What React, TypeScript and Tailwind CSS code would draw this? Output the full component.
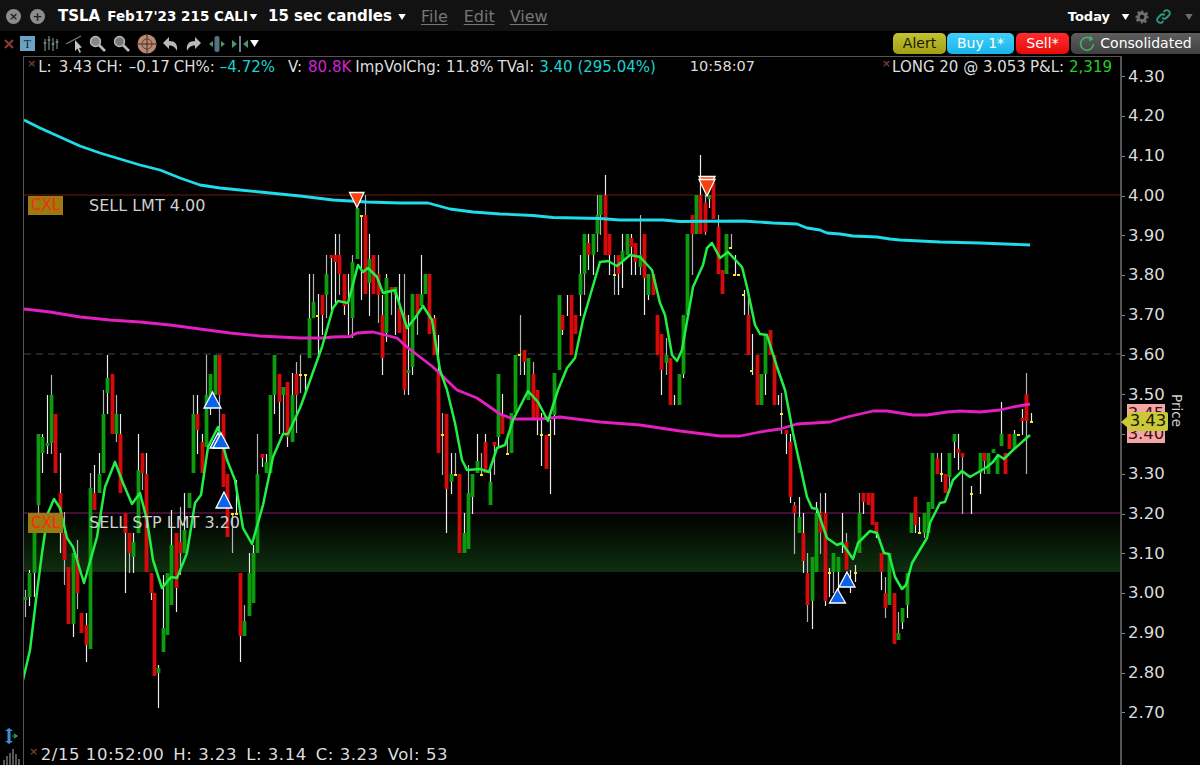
import React from "react";

type C = [number, string, number, number, number?, number?];

const groups: { ox: number; items: C[] }[] = [
  {
    ox: 0,
    items: [
      [75, "g", 597, 600, 590, 617], [88, "g", 573, 597, 570, 606], [101, "g", 527, 573, 520, 597], [114, "g", 434, 505, 434, 513],
      [127, "g", 437, 453, 434, 473], [140, "g", 443, 446, 395, 454], [153, "g", 395, 443, 375, 454], [166, "r", 414, 473],
      [179, "r", 493, 510, 453, 553], [192, "r", 533, 560, 512, 585], [205, "r", 567, 624], [218, "g", 553, 624, 553, 637],
      [231, "r", 558, 593, 540, 609], [244, "r", 613, 633], [257, "r", 625, 645, 613, 662], [270, "g", 488, 649, 473, 649],
      [283, "r", 493, 510, 465, 510], [296, "g", 474, 493, 453, 493], [309, "g", 414, 473, 390, 473], [322, "g", 378, 393, 355, 414],
      [335, "r", 374, 434], [348, "g", 414, 434, 395, 442], [361, "r", 434, 493, 414, 493], [374, "r", 513, 533, 513, 593],
      [387, "r", 533, 553, 533, 573], [400, "g", 542, 557, 533, 573], [413, "g", 470, 533, 434, 533], [426, "r", 453, 473, 453, 490],
      [439, "r", 474, 572, 453, 572], [452, "r", 573, 593, 573, 600], [462, "r", 593, 676], [475, "g", 668, 673, 665, 708],
      [488, "g", 628, 652, 575, 628], [501, "g", 573, 635], [514, "g", 545, 605, 510, 605], [527, "r", 533, 588, 533, 612],
      [540, "r", 542, 553, 507, 575], [553, "g", 530, 553, 493, 553], [566, "g", 493, 508], [579, "g", 414, 473, 395, 473],
      [592, "r", 414, 430, 395, 454], [605, "r", 442, 473, 434, 473], [618, "g", 395, 447, 355, 447], [631, "g", 374, 407, 374, 415],
      [644, "g", 355, 395], [656, "r", 355, 395, 355, 430], [669, "r", 414, 487], [682, "r", 474, 537], [695, "w", 513, 513, 513, 553],
      [708, "w", 480, 480, 480, 513], [720, "r", 573, 636, 573, 662], [733, "g", 621, 636, 605, 621], [746, "g", 573, 616, 553, 616],
      [759, "g", 553, 603, 545, 553], [772, "g", 474, 553, 434, 553], [785, "r", 454, 458, 454, 467], [798, "g", 462, 473, 454, 473],
      [811, "g", 395, 473], [823, "g", 355, 395, 355, 414], [836, "r", 374, 402, 374, 434], [849, "g", 387, 395, 387, 434],
      [862, "r", 382, 437, 382, 447], [875, "g", 395, 442, 373, 442], [888, "r", 374, 395, 362, 433],
    ],
  },
  {
    ox: 300,
    items: [
      [1, "w", 355, 355, 355, 393], [14, "w", 375, 375, 375, 393], [27, "g", 318, 358, 274, 358], [40, "g", 302, 318, 274, 318],
      [53, "w", 316, 316, 294, 355], [66, "r", 295, 315, 295, 335], [79, "g", 274, 295, 255, 318], [92, "r", 255, 258, 255, 315],
      [105, "r", 255, 262, 234, 303], [118, "r", 255, 274, 234, 295], [131, "r", 274, 306, 274, 315], [144, "w", 274, 274, 274, 335],
      [157, "g", 262, 318, 255, 338], [170, "g", 208, 259], [183, "w", 216, 216, 216, 300], [194, "r", 215, 294, 195, 294],
      [207, "g", 259, 283, 234, 316], [220, "r", 255, 294], [233, "r", 274, 295, 255, 323], [246, "r", 315, 358, 295, 375],
      [259, "g", 278, 333, 274, 342], [272, "r", 287, 290, 287, 315], [285, "g", 287, 295, 287, 335], [298, "r", 308, 333, 274, 333],
      [311, "r", 315, 390, 274, 395], [324, "g", 370, 373, 315, 395], [337, "g", 294, 367, 294, 375], [350, "r", 294, 313, 294, 335],
      [362, "g", 294, 306, 255, 306], [375, "g", 274, 294], [388, "r", 274, 334], [401, "r", 318, 355, 315, 355],
      [414, "r", 373, 453, 335, 453], [426, "w", 413, 413, 413, 475], [439, "r", 414, 489, 414, 533], [452, "g", 474, 482, 453, 494],
      [465, "w", 475, 475, 453, 475], [478, "r", 474, 553], [491, "g", 533, 553, 513, 533], [504, "g", 493, 549, 465, 493],
      [517, "g", 474, 497, 474, 514], [530, "g", 461, 473, 434, 461], [543, "w", 475, 475, 453, 475], [556, "r", 442, 473, 434, 473],
      [569, "g", 482, 505, 470, 482], [582, "r", 442, 446, 442, 475], [595, "g", 374, 437, 374, 447], [607, "r", 414, 434, 394, 434],
      [620, "w", 454, 454, 434, 453], [633, "g", 413, 453], [646, "g", 355, 413], [659, "w", 355, 355, 315, 375],
      [672, "r", 350, 362, 350, 375], [685, "g", 358, 400], [698, "r", 374, 420, 362, 420], [711, "r", 390, 420, 390, 435],
      [724, "w", 413, 413, 413, 466], [737, "r", 435, 469], [750, "w", 420, 420, 420, 494], [763, "g", 373, 415, 373, 435],
      [776, "g", 295, 370], [787, "r", 315, 330, 315, 335], [802, "w", 295, 295, 295, 316], [813, "r", 295, 355],
      [826, "r", 315, 334], [839, "g", 274, 295, 255, 316], [852, "g", 234, 274, 234, 295], [865, "r", 243, 255, 234, 270],
      [878, "g", 234, 255, 234, 275], [891, "g", 215, 234, 195, 252],
    ],
  },
  {
    ox: 600,
    items: [
      [0, "g", 195, 215, 195, 235], [15, "r", 195, 255, 175, 255], [28, "r", 234, 255, 234, 275], [41, "w", 255, 255, 255, 295],
      [54, "r", 255, 274, 255, 295], [67, "g", 251, 260, 234, 288], [80, "g", 234, 255], [93, "r", 238, 247, 234, 275],
      [106, "r", 243, 262, 243, 275], [119, "g", 255, 267, 215, 275], [132, "r", 234, 278, 234, 315], [145, "g", 274, 295, 274, 300],
      [158, "r", 274, 295], [171, "r", 315, 355], [184, "r", 334, 370, 334, 395], [197, "g", 355, 363, 338, 375],
      [210, "r", 358, 405], [223, "w", 395, 395, 395, 405], [236, "g", 374, 405], [249, "g", 315, 374, 315, 378],
      [262, "g", 234, 315], [275, "r", 215, 234, 215, 275], [288, "g", 195, 234], [301, "r", 195, 234, 155, 234],
      [314, "r", 203, 232, 195, 235], [327, "g", 195, 199, 195, 208], [340, "r", 183, 219], [353, "r", 227, 274, 215, 274],
      [366, "r", 270, 294], [379, "g", 234, 274], [392, "w", 234, 234, 234, 248], [405, "w", 255, 255, 255, 275],
      [431, "w", 290, 290, 290, 315], [444, "r", 315, 355, 295, 315], [457, "w", 334, 334, 334, 375], [470, "r", 355, 405],
      [483, "g", 374, 405], [496, "g", 335, 374, 335, 395], [509, "r", 330, 355], [522, "r", 355, 405], [535, "w", 395, 395, 395, 405],
    ],
  },
  {
    ox: 780,
    items: [
      [4, "w", 393, 393, 393, 434], [17, "r", 430, 434, 430, 454], [30, "r", 442, 497, 434, 503], [43, "r", 505, 513, 502, 554],
      [56, "g", 517, 533, 497, 517], [69, "r", 533, 561, 513, 573], [82, "r", 573, 605, 553, 622], [95, "g", 557, 601, 557, 629],
      [108, "g", 513, 572, 502, 572], [121, "r", 513, 533, 493, 554], [134, "r", 513, 601, 493, 606], [147, "w", 568, 568, 568, 597],
      [160, "g", 553, 572, 553, 593], [173, "g", 557, 572, 557, 593], [186, "w", 513, 513, 513, 553], [198, "r", 542, 570, 533, 570],
      [211, "w", 570, 570, 570, 593], [224, "w", 565, 565, 565, 582], [237, "g", 513, 553, 493, 513], [250, "r", 493, 502, 493, 514],
      [263, "r", 493, 505], [276, "r", 493, 525], [289, "r", 522, 533, 522, 538], [302, "r", 553, 572, 553, 590],
      [315, "r", 593, 608, 577, 618], [328, "g", 553, 605], [341, "r", 593, 644], [354, "g", 633, 640, 612, 633],
      [367, "g", 608, 622, 608, 629], [380, "g", 573, 605, 573, 618], [393, "g", 513, 533], [405, "r", 497, 525, 497, 533],
      [418, "w", 517, 517, 517, 533], [431, "g", 513, 533, 513, 538], [444, "g", 502, 533], [457, "g", 453, 509],
      [470, "r", 458, 474, 453, 474], [483, "w", 453, 453, 453, 482], [496, "r", 474, 493], [508, "g", 453, 477, 453, 493],
      [521, "g", 434, 442, 434, 458], [534, "r", 449, 453, 434, 470], [547, "r", 453, 457, 453, 514], [573, "w", 486, 486, 486, 514],
      [599, "g", 453, 473, 453, 494], [612, "r", 453, 461, 453, 474], [625, "g", 453, 474], [638, "g", 449, 453],
      [651, "g", 457, 474], [662, "g", 434, 446, 402, 434], [675, "r", 453, 474], [688, "r", 434, 449], [701, "g", 434, 449, 430, 449],
      [727, "r", 418, 421, 409, 435], [739, "r", 394, 421, 373, 474], [752, "w", 413, 413, 413, 422],
    ],
  },
];

const dashes: [number, number][] = [
  [300, 375], [305, 375], [317, 316], [361, 216], [442, 435], [455, 475], [481, 475], [541, 435], [549, 435],
  [507, 454], [519, 355], [614, 275], [730, 248], [734, 275], [738, 275], [743, 295], [751, 371], [232, 514], [236, 514],
  [829, 573], [855, 573], [919, 533], [941, 474], [971, 494], [1018, 435], [1031, 422], [781, 414],
];

const cyan = "24,120 40,128 60,137 80,146 100,153 120,159 140,165 160,170 180,178 200,185 220,188 240,190 260,192 280,194 300,196 333,200 367,202 400,203 428,203 450,209 473,212 500,214 533,215.5 553,217.5 600,218.5 620,220 663,220 680,221.5 743,221 773,223 797,224 807,228 820,230 827,233 840,234 853,236 877,237 890,239 900,240 940,242 980,243 1030,245";
const magenta = "24,309 50,312 80,317 110,320 140,322 170,325 200,329 230,333 260,336 300,338 323,338 333,337 350,336.5 357,333 373,332 397,338 407,347 433,367 457,390 477,398 500,414 513,419 540,419 560,417 600,422 640,425 680,431 720,436 740,436 760,432 780,429 797,424 830,422 847,417 873,411 887,411 913,415 927,415 947,412 960,411 980,412 1000,410 1013,407 1030,404";
const green = "23,680 30,650 36,600 42,553 48,513 54,499 60,508 67,538 73,547 84,583 97,537 105,487 115,462 123,483 132,504 140,493 147,520 153,560 162,588 171,577 177,578 187,553 195,503 201,495 208,447 218,427 227,460 235,480 243,528 252,544 263,505 273,457 283,434 288,434 300,408 303,400 322,347 333,308 338,301 348,303 358,265 363,272 368,268 377,277 383,293 395,290 407,328 415,318 423,306 432,320 440,370 447,390 455,423 462,460 467,470 480,469 489,472 497,448 505,445 513,420 528,391 538,402 548,421 558,390 567,368 575,358 583,320 600,262 608,261 617,266 630,255 640,257 652,270 660,303 665,315 672,355 677,361 682,350 693,287 703,265 707,248 712,243 720,258 728,252 742,267 747,287 755,325 760,334 767,335 777,367 785,390 793,433 807,497 812,508 817,509 827,538 837,545 842,543 853,559 858,543 870,531 877,533 884,553 889,554 895,577 902,589 906,585 912,563 927,538 930,523 940,503 945,502 953,480 962,471 970,477 987,467 993,462 998,455 1004,459 1013,450 1030,435";

const up: [number, number, number, number][] = [
  [212.5, 392, 408, 8.5], [218, 433, 448, 8], [221, 433, 448, 8], [224, 492, 508, 8], [847, 572, 587, 8], [837.5, 589, 603, 8],
];

function Candles() {
  return (
    <>
      {groups.map((g) =>
        g.items.map(([zx, c, bt, bb, wt, wb], i) => {
          const x = Math.round(g.ox + zx / 3);
          const fill = c === "g" ? "#0d9c0d" : "#d60a0a";
          return (
            <g key={g.ox + "-" + i}>
              {wt !== undefined && wb !== undefined && (
                <line x1={x + 0.5} x2={x + 0.5} y1={wt} y2={wb} stroke={i % 3 === 0 ? "#b4b4b4" : "#ececec"} strokeWidth="1.2" />
              )}
              {c !== "w" && <rect x={x - 1.4} y={bt} width="3.8" height={Math.max(bb - bt, 2)} fill={fill} />}
            </g>
          );
        }),
      )}
      {dashes.map(([x, y], i) => (
        <rect key={i} x={x - 1} y={y - 1} width="3" height="2" fill="#ffe81a" />
      ))}
    </>
  );
}

function Chart() {
  return (
    <svg className="absolute inset-0 h-full w-full" viewBox="24 57 1096 708" preserveAspectRatio="none">
      <defs>
        <linearGradient id="band" x1="0" y1="0" x2="0" y2="1">
          <stop offset="0" stopColor="#000200" />
          <stop offset="1" stopColor="#0f2f0f" />
        </linearGradient>
      </defs>
      <rect x="24" y="514" width="1096" height="58" fill="url(#band)" />
      <line x1="24" x2="1120" y1="195" y2="195" stroke="#6a1f0e" />
      <line x1="24" x2="1120" y1="354" y2="354" stroke="#444" strokeDasharray="7 5" />
      <line x1="24" x2="1120" y1="513" y2="513" stroke="#8a1b6c" />
      <Candles />
      <polyline points={magenta} fill="none" stroke="#e41fc0" strokeWidth="2.8" strokeLinejoin="round" />
      <polyline points={cyan} fill="none" stroke="#1fdcea" strokeWidth="2.8" strokeLinejoin="round" />
      <polyline points={green} fill="none" stroke="#22ee44" strokeWidth="2.5" strokeLinejoin="round" />
      {up.map(([x, t, b, w], i) => (
        <polygon key={i} points={`${x},${t} ${x + w},${b} ${x - w},${b}`} fill="#0a62ea" stroke="#fff" strokeWidth="1.3" />
      ))}
      <polygon points="349.5,192.5 364,192.5 357,207.5" fill="#f6420f" stroke="#fff" strokeWidth="1.3" />
      <polygon points="699,176.5 715,176.5 707,191" fill="#f6420f" stroke="#fff" strokeWidth="1.3" />
      <polygon points="699,179.5 715,179.5 707,196" fill="#f6420f" stroke="#fff" strokeWidth="1.3" />
    </svg>
  );
}

const prices = ["4.30", "4.20", "4.10", "4.00", "3.90", "3.80", "3.70", "3.60", "3.50", "3.40", "3.30", "3.20", "3.10", "3.00", "2.90", "2.80", "2.70"];

function Caret({ className }: { className: string }) {
  return (
    <svg className={className} viewBox="0 0 10 8">
      <polygon points="0,0 10,0 5,8" fill="currentColor" />
    </svg>
  );
}

function Mag({ dim }: { dim?: boolean }) {
  return (
    <svg className="h-[18px] w-[18px]" viewBox="0 0 18 18">
      <circle cx="6.5" cy="6.5" r="5" fill={dim ? "#777" : "#888"} stroke="#bbb" strokeWidth="1.4" />
      <line x1="10" y1="10" x2="16" y2="16" stroke="#bbb" strokeWidth="2.6" />
    </svg>
  );
}

function Toolbar() {
  return (
    <div className="flex h-[25px] items-center bg-black pl-[4px]">
      <svg className="h-[10px] w-[10px]" viewBox="0 0 10 10">
        <path d="M1 1 L9 9 M9 1 L1 9" stroke="#8a3a34" strokeWidth="2.2" />
      </svg>
      <div className="ml-[6px] flex h-[15px] w-[15px] items-center justify-center bg-[#6ba3c4] text-[12px] leading-none text-[#123] [font-family:'Liberation_Serif',serif]">T</div>
      <svg className="ml-[8px] h-[18px] w-[16px]" viewBox="0 0 16 18">
        <path d="M2 4v12M6 1v14M10 3v13M14 4v10" stroke="#6f8f80" strokeWidth="1.2" />
        <path d="M0.5 8h3M4.5 5h3M8.5 9h3M12.5 7h3" stroke="#9ab" strokeWidth="1.2" />
      </svg>
      <svg className="ml-[7px] h-[20px] w-[18px]" viewBox="0 0 18 20">
        <line x1="0" y1="10" x2="15" y2="2" stroke="#777" strokeWidth="1.2" />
        <path d="M9 6 L9 17 L11.5 14.5 L13.5 19 L15 18 L13 14 L16 13.5 Z" fill="#c4c4c4" />
      </svg>
      <div className="ml-[5px]"><Mag /></div>
      <div className="ml-[6px]"><Mag dim /></div>
      <svg className="ml-[6px] h-[20px] w-[20px]" viewBox="0 0 20 20">
        <circle cx="10" cy="10" r="9.5" fill="#b98a72" />
        <path d="M10 1v18M1 10h18" stroke="#3a2a20" strokeWidth="1" />
        <circle cx="10" cy="10" r="5" fill="none" stroke="#5a4030" strokeWidth="1" />
      </svg>
      <svg className="ml-[5px] h-[16px] w-[17px]" viewBox="0 0 17 16">
        <path d="M1 7 L7 1 V5 C13 5 16 8 15 15 C13 11 11 9.5 7 9.5 V13 Z" fill="#b9b9b9" />
      </svg>
      <svg className="ml-[6px] h-[16px] w-[17px]" viewBox="0 0 17 16">
        <path d="M16 7 L10 1 V5 C4 5 1 8 2 15 C4 11 6 9.5 10 9.5 V13 Z" fill="#b9b9b9" />
      </svg>
      <svg className="ml-[6px] h-[18px] w-[18px]" viewBox="0 0 18 18">
        <rect x="6.5" y="1" width="5" height="16" rx="2" fill="#5a6f80" />
        <path d="M5 6 L1 9 L5 12Z M13 6 L17 9 L13 12Z" fill="#4c9a6a" />
      </svg>
      <svg className="ml-[5px] h-[18px] w-[18px]" viewBox="0 0 18 18">
        <rect x="8" y="1" width="2" height="16" fill="#6c8090" />
        <path d="M1 5 L6 9 L1 13Z M17 5 L12 9 L17 13Z" fill="#4c9a6a" />
      </svg>
      <Caret className="ml-[1px] h-[7px] w-[9px] text-white" />
    </div>
  );
}

export default function App() {
  return (
    <div className="flex h-[765px] w-[1200px] flex-col overflow-hidden bg-black text-[#e6e6e6] [font-family:'DejaVu_Sans',sans-serif]">
      <div className="flex h-[31px] items-center bg-[#121212] pl-[6px] pt-[2px]">
        <div className="flex h-[15px] w-[15px] items-center justify-center rounded-full bg-[#8c8c8c] text-[11px] leading-none font-bold text-[#222]">×</div>
        <div className="ml-[9px] flex h-[15px] w-[15px] items-center justify-center rounded-full bg-[#8c8c8c] text-[12px] leading-none font-bold text-[#222]">+</div>
        <span className="ml-[13px] text-[15px] font-bold text-white">TSLA</span>
        <span className="ml-[7px] text-[13.5px] font-bold whitespace-nowrap text-white">Feb17'23 215 CALI</span>
        <Caret className="ml-[1px] h-[6px] w-[9px] text-white" />
        <span className="ml-[10px] text-[15px] font-bold whitespace-nowrap text-white">15 sec candles</span>
        <Caret className="ml-[5px] h-[6px] w-[10px] text-white" />
        <span className="ml-[14px] text-[16px] text-[#767676] underline underline-offset-2">File</span>
        <span className="ml-[16px] text-[16px] text-[#767676] underline underline-offset-2">Edit</span>
        <span className="ml-[15px] text-[16px] text-[#767676] underline underline-offset-2">View</span>
        <span className="ml-auto text-[13px] font-bold text-white">Today</span>
        <Caret className="ml-[11px] h-[6px] w-[9px] text-white" />
        <svg className="ml-[5px] h-[14px] w-[14px]" viewBox="0 0 24 24">
          <path d="M10 1h4l.6 3.2 2.4 1 2.7-1.8 2.8 2.8-1.8 2.7 1 2.4L23 10v4l-3.2.6-1 2.4 1.8 2.7-2.8 2.8-2.7-1.8-2.4 1L14 23h-4l-.6-3.2-2.4-1-2.7 1.8-2.8-2.8 1.8-2.7-1-2.4L1 14v-4l3.2-.6 1-2.4-1.8-2.7 2.8-2.8 2.7 1.8 2.4-1Z" fill="#6e6e6e" />
          <circle cx="12" cy="12" r="4" fill="#121212" />
        </svg>
        <svg className="ml-[7px] h-[15px] w-[15px]" viewBox="0 0 24 24" fill="none" stroke="#2f9a86" strokeWidth="3">
          <path d="M10 14a5 5 0 0 0 7 0l4-4a5 5 0 0 0-7-7l-2 2" />
          <path d="M14 10a5 5 0 0 0-7 0l-4 4a5 5 0 0 0 7 7l2-2" />
        </svg>
        <Caret className="ml-[13px] mr-[6px] h-[6px] w-[10px] text-[#6e6e6e]" />
      </div>
      <div className="relative">
        <Toolbar />
        <div className="absolute right-0 top-[2px] flex h-[21px] items-center gap-px text-[14px]">
          <div className="flex h-full w-[53px] items-center justify-center rounded-[5px] bg-gradient-to-b from-[#c2c232] to-[#a0a010] text-[#1a1a00]">Alert</div>
          <div className="flex h-full w-[67px] items-center justify-center rounded-[5px] bg-gradient-to-b from-[#3fd0f8] to-[#14b4ec] text-white">Buy 1*</div>
          <div className="ml-px flex h-full w-[53px] items-center justify-center rounded-[5px] bg-gradient-to-b from-[#ff2a2a] to-[#e80808] text-white">Sell*</div>
          <div className="ml-px flex h-full w-[129px] items-center justify-center gap-[5px] rounded-l-[5px] bg-gradient-to-b from-[#5e5e5e] to-[#404040] text-white">
            <svg className="h-[16px] w-[16px]" viewBox="0 0 16 16" fill="none" stroke="#3fb56a" strokeWidth="1.6">
              <path d="M12 2.8 A6.4 6.4 0 1 0 14.4 8" />
              <path d="M11 0.5 L13 3 L10.5 4.5" />
            </svg>
            Consolidated
          </div>
        </div>
      </div>
      <div className="flex min-h-0 flex-1">
        <div className="relative w-[23px] shrink-0">
          <svg className="absolute left-[3px] top-[672px] h-[16px] w-[16px]" viewBox="0 0 16 16">
            <path d="M6 0 L10 3 H7.5 V13 H10 L6 16 L2 13 H4.5 V3 H2 Z" fill="#3f8ed8" />
            <path d="M9 8 H13 M11 6 L14 8 L11 10" stroke="#2aa860" strokeWidth="1.2" fill="none" />
          </svg>
          <svg className="absolute left-[3px] top-[692px] h-[17px] w-[18px]" viewBox="0 0 18 17" stroke="#aaa" strokeWidth="1">
            <path d="M1 12v5M4 8v9M7 5v12M10 1v16M13 6v11M16 11v6" />
          </svg>
        </div>
        <div className="relative flex-1 border-t border-l border-[#555] bg-black">
          <Chart />
          <div className="absolute left-[3px] top-[2px] flex h-[16px] items-center text-[15px] whitespace-nowrap text-[#ddd]">
            <span className="mr-[2px] -translate-y-[3px] text-[11px] font-bold text-[#7a3a34]">×</span>
            <span>L:</span><span className="ml-[7px]">3.43</span>
            <span className="ml-[4px]">CH:</span><span className="ml-[6px]">–0.17</span>
            <span className="ml-[4px]">CH%:</span><span className="ml-[5px] text-[#1bd2d2]">–4.72%</span>
            <span className="ml-[13px]">V:</span><span className="ml-[6px] text-[#d522d5]">80.8K</span>
            <span className="ml-[4px]">ImpVolChg:</span><span className="ml-[5px]">11.8%</span>
            <span className="ml-[4px]">TVal:</span><span className="ml-[5px] text-[#1bd2d2]">3.40 (295.04%)</span>
            <span className="ml-[34px] text-[14.5px]">10:58:07</span>
          </div>
          <div className="absolute right-[8px] top-[2px] flex h-[16px] items-center text-[15px] whitespace-nowrap text-[#ddd]">
            <span className="mr-[1px] -translate-y-[3px] text-[11px] font-bold text-[#7a3a34]">×</span>
            <span>LONG 20 @ 3.053</span><span className="ml-[4px]">P&amp;L:</span><span className="ml-[5px] text-[#22d022]">2,319</span>
          </div>
          <div className="absolute left-[4px] top-[139px] flex h-[19px] w-[35px] items-center justify-center bg-[#9c7a10] text-[15px] text-[#f03010]">CXL</div>
          <div className="absolute left-[65px] top-[139px] text-[16px] leading-[20px] whitespace-nowrap text-[#cfcfcf]">SELL LMT 4.00</div>
          <div className="absolute left-[4px] top-[456px] flex h-[20px] w-[35px] items-center justify-center bg-[#9c7a10] text-[15px] text-[#f03010]">CXL</div>
          <div className="absolute left-[65px] top-[456px] text-[16px] leading-[20px] whitespace-nowrap text-[#cfcfcf]">SELL STP LMT 3.20</div>
          <div className="absolute left-[5px] bottom-[2px] flex h-[16px] items-center text-[16.5px] tracking-[0.55px] whitespace-nowrap text-[#ddd]">
            <span className="mr-[2px] -translate-y-[3px] text-[11px] font-bold text-[#7a3a34]">×</span>
            2/15 10:52:00<span className="ml-[9px]">H: 3.23</span><span className="ml-[9px]">L: 3.14</span><span className="ml-[9px]">C: 3.23</span><span className="ml-[9px]">Vol: 53</span>
          </div>
        </div>
        <div className="relative w-[80px] shrink-0 border-l-2 border-[#555] pt-px text-[16.5px] text-[#dcdcdc]">
          {prices.map((p) => (
            <div key={p} className="flex h-[39.75px] items-center">
              <div className="h-px w-[3px] bg-[#888]" />
              <span className="ml-[3px]">{p}</span>
            </div>
          ))}
          <div className="absolute left-[5px] top-[348px] flex h-[39px] w-[38px] flex-col items-center justify-center bg-[#f4a6a6] text-[16.5px] leading-[19.5px] text-[#3a1010]">
            <span>3.45</span>
            <span>3.40</span>
          </div>
          <div className="absolute left-[-1px] top-[356px] flex h-[19px] items-center">
            <svg className="h-[12px] w-[7px]" viewBox="0 0 7 12"><polygon points="0,6 7,0 7,12" fill="#c9c93a" /></svg>
            <div className="flex h-full w-[40px] items-center justify-center rounded-[2px] bg-[#c9c93a] text-[16.5px] text-[#1a1a00]">3.43</div>
          </div>
          <div className="absolute left-[47px] top-[338px] origin-top-left translate-x-[14px] rotate-90 text-[13.5px] leading-none text-[#cfcfcf]">Price</div>
        </div>
      </div>
    </div>
  );
}
